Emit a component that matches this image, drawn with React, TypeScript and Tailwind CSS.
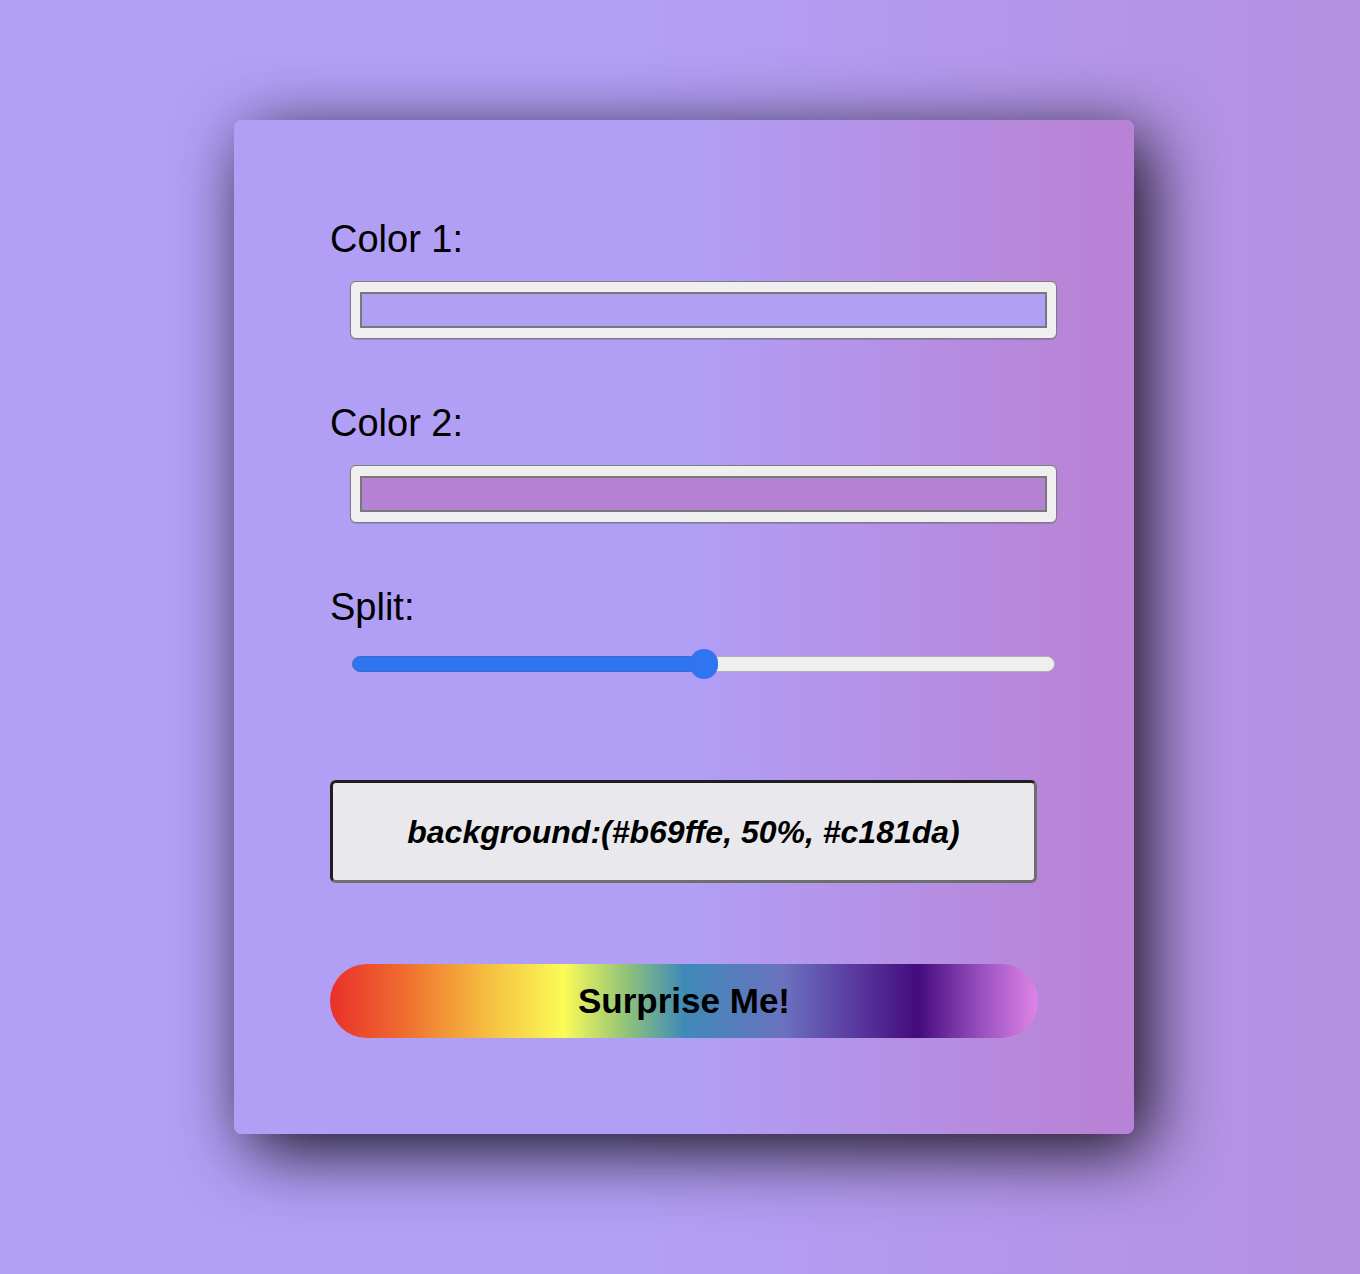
import React, { useState } from "react";

const font = "font-['Liberation_Sans','Helvetica',Arial,sans-serif]";

const ColorField = ({ label, swatch }: { label: string; swatch: string }) => (
  <>
    <label className="block text-[38px] leading-[44px] text-black">{label}</label>
    <div className="mt-5 ml-5 w-[707px] h-[58px] rounded-md border border-[#7c7c7c] bg-[#efefef] px-[9px] py-[10px] shadow-[0_1px_1px_rgba(0,0,0,0.15)]">
      <div className={`h-full w-full border-2 border-[#787878] ${swatch}`}></div>
    </div>
  </>
);

const App = () => {
  const [split] = useState(50);

  return (
    <div className={`min-h-screen w-full pl-2 pt-[120px] pb-[140px] bg-[linear-gradient(to_right,#b2a0f7_45%,#b58fe0)] ${font}`}>
      <div className="mx-auto w-[900px] rounded-lg px-24 pt-[97px] pb-24 bg-[linear-gradient(to_right,#b19ff6_50%,#b883d6_95%)] shadow-[14px_16px_70px_rgba(0,0,0,0.9)]">
        <ColorField label="Color 1:" swatch="bg-[#b19ff6]" />
        <div className="mt-[62px]">
          <ColorField label="Color 2:" swatch="bg-[#b683d4]" />
        </div>

        <label className="mt-[62px] block text-[38px] leading-[44px] text-black">Split:</label>
        {/* range slider */}
        <div className="relative mt-5 ml-[22px] h-[30px] w-[703px]">
          <div className="absolute left-0 right-0 top-[7px] h-[16px] rounded-full border border-[#b3b3b3] bg-[#efefef]"></div>
          <div
            className="absolute left-0 top-[7px] h-[16px] rounded-l-full border border-[#3b6cc4] bg-[#3174f1]"
            style={{ width: `${split}%` }}
          ></div>
          <div
            className="absolute top-0 h-[30px] w-[28px] -translate-x-1/2 rounded-full bg-[#3174f1]"
            style={{ left: `${split}%` }}
          ></div>
        </div>

        <div className="mt-[101px] flex h-[103px] w-[707px] items-center justify-center rounded-md border-[3px] border-t-[#1f1f1f] border-l-[#1f1f1f] border-b-[#6e6e6e] border-r-[#6e6e6e] bg-[#e9e9ed]">
          <span className="text-[32px] font-bold italic text-black">
            background:(#b69ffe, {split}%, #c181da)
          </span>
        </div>

        <button className="mt-[81px] flex h-[74px] w-[708px] items-center justify-center rounded-full bg-[linear-gradient(to_right,#e8302a_0%,#ef6a2f_10%,#f5bd40_22%,#fbfb57_33%,#8fc27a_42%,#3f8ab8_50%,#6a72c0_64%,#5a3aa0_74%,#440b7c_83%,#9a50c0_92%,#df84e6_100%)]">
          <span className="text-[35px] font-bold text-black">Surprise Me!</span>
        </button>
      </div>
    </div>
  );
};

export default App;
